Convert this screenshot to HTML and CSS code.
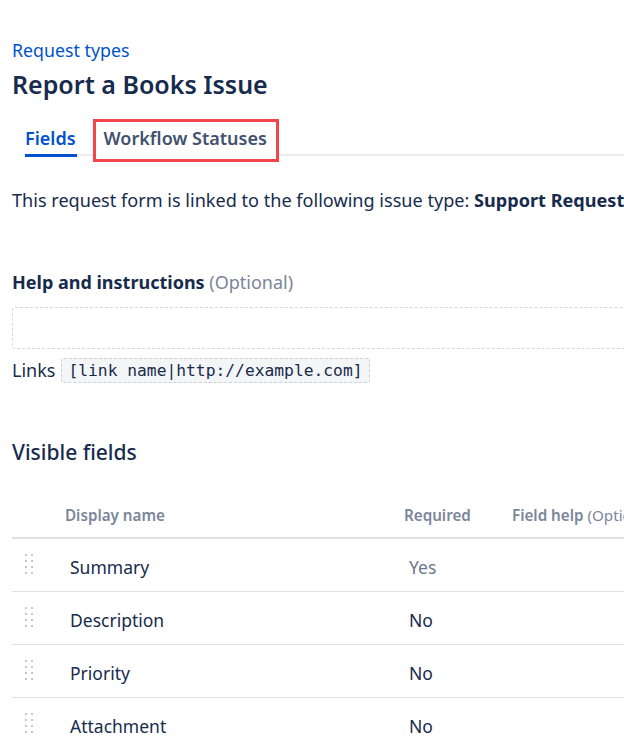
FILE: index.html
```html
<!DOCTYPE html>
<html>
<head>
<meta charset="utf-8">
<link rel="stylesheet" href="styles.css">
</head>
<body>
<div class="page">
  <a class="crumb" href="#">Request types</a>
  <h1 class="title">Report a Books Issue</h1>
  <div class="tabs">
    <div class="tab active">Fields</div>
    <div class="tab marked">Workflow Statuses</div>
  </div>
  <p class="linked">This request form is linked to the following issue type: <b>Support Request</b></p>

  <div class="help-label"><b>Help and instructions</b> <span class="opt">(Optional)</span></div>
  <div class="help-box"></div>
  <div class="links">Links <code class="code">[link name|http://example.com]</code></div>

  <h2 class="section">Visible fields</h2>
  <div class="table">
    <div class="thead">
      <div class="cell"></div>
      <div class="cell">Display name</div>
      <div class="cell">Required</div>
      <div class="cell">Field help <span class="opt-n">(Optional)</span></div>
    </div>
    <div class="trow">
      <div class="cell"><svg class="grip" viewBox="0 0 8 20" width="8" height="20"><g fill="#C1C7D0"><rect x="0" y="0" width="2" height="2"/><rect x="6" y="0" width="2" height="2"/><rect x="0" y="6" width="2" height="2"/><rect x="6" y="6" width="2" height="2"/><rect x="0" y="12" width="2" height="2"/><rect x="6" y="12" width="2" height="2"/><rect x="0" y="18" width="2" height="2"/><rect x="6" y="18" width="2" height="2"/></g></svg></div>
      <div class="cell name">Summary</div>
      <div class="cell req muted">Yes</div>
      <div class="cell"></div>
    </div>
    <div class="trow">
      <div class="cell"><svg class="grip" viewBox="0 0 8 20" width="8" height="20"><g fill="#C1C7D0"><rect x="0" y="0" width="2" height="2"/><rect x="6" y="0" width="2" height="2"/><rect x="0" y="6" width="2" height="2"/><rect x="6" y="6" width="2" height="2"/><rect x="0" y="12" width="2" height="2"/><rect x="6" y="12" width="2" height="2"/><rect x="0" y="18" width="2" height="2"/><rect x="6" y="18" width="2" height="2"/></g></svg></div>
      <div class="cell name">Description</div>
      <div class="cell req">No</div>
      <div class="cell"></div>
    </div>
    <div class="trow">
      <div class="cell"><svg class="grip" viewBox="0 0 8 20" width="8" height="20"><g fill="#C1C7D0"><rect x="0" y="0" width="2" height="2"/><rect x="6" y="0" width="2" height="2"/><rect x="0" y="6" width="2" height="2"/><rect x="6" y="6" width="2" height="2"/><rect x="0" y="12" width="2" height="2"/><rect x="6" y="12" width="2" height="2"/><rect x="0" y="18" width="2" height="2"/><rect x="6" y="18" width="2" height="2"/></g></svg></div>
      <div class="cell name">Priority</div>
      <div class="cell req">No</div>
      <div class="cell"></div>
    </div>
    <div class="trow">
      <div class="cell"><svg class="grip" viewBox="0 0 8 20" width="8" height="20"><g fill="#C1C7D0"><rect x="0" y="0" width="2" height="2"/><rect x="6" y="0" width="2" height="2"/><rect x="0" y="6" width="2" height="2"/><rect x="6" y="6" width="2" height="2"/><rect x="0" y="12" width="2" height="2"/><rect x="6" y="12" width="2" height="2"/><rect x="0" y="18" width="2" height="2"/><rect x="6" y="18" width="2" height="2"/></g></svg></div>
      <div class="cell name">Attachment</div>
      <div class="cell req">No</div>
      <div class="cell"></div>
    </div>
  </div>
</div>
</body>
</html>
```
FILE: styles.css
```css
html, body {
  margin: 0;
  padding: 0;
  background: #fff;
  overflow: hidden;
}
body {
  font-family: "Noto Sans", "Open Sans", sans-serif;
  color: #172B4D;
  width: 624px;
  height: 748px;
}
.page {
  width: 1000px;
  padding: 39px 0 0 12px;
}
.crumb {
  display: block;
  font-size: 17.8px;
  line-height: 22px;
  color: #0052CC;
  text-decoration: none;
}
.title {
  margin: 7px 0 0;
  font-size: 25px;
  line-height: 32px;
  font-weight: 600;
  color: #172B4D;
}
.tabs {
  display: flex;
  margin-top: 22px;
  margin-left: 13px;
  border-bottom: 2px solid #EBECF0;
  box-sizing: border-box;
  height: 34px;
}
.tab {
  font-size: 18px;
  font-weight: 600;
  color: #42526E;
  line-height: 22px;
  padding-top: 5px;
}
.tab.active {
  color: #0052CC;
  border-bottom: 3px solid #0052CC;
  margin-bottom: -3px;
  padding-right: 1px;
}
.tab.marked {
  margin-left: 16px;
  margin-top: -3px;
  padding: 5px 9px 0 8px;
  border: 3px solid #F4434A;
  background: #fff;
  position: relative;
  box-sizing: border-box;
  height: 43px;
}
.linked {
  margin: 32px 0 0;
  font-size: 18.1px;
  line-height: 24px;
  white-space: nowrap;
}
.linked b { font-weight: 700; }
.help-label {
  margin-top: 58px;
  font-size: 18px;
  line-height: 24px;
}
.help-label b { font-weight: 700; }
.opt { color: #7A869A; }
.help-box {
  margin-top: 13px;
  height: 40px;
  border: 1px dashed #D4D7DD;
  border-radius: 3px;
}
.links {
  margin-top: 8px;
  font-size: 18px;
  line-height: 26px;
  display: flex;
  align-items: center;
  gap: 6px;
}
.code {
  font-family: "DejaVu Sans Mono", "Liberation Mono", monospace;
  font-size: 16.3px;
  line-height: 23px;
  background: #F4F5F7;
  border: 1px dashed #CCCFD6;
  border-radius: 3px;
  padding: 0 6px;
  color: #172B4D;
}
.section {
  margin: 55px 0 0;
  font-size: 21px;
  line-height: 28px;
  font-weight: 500;
}
.table {
  margin-top: 27px;
  width: 900px;
}
.thead, .trow {
  display: grid;
  grid-template-columns: 53px 339px 108px 1fr;
  align-items: center;
}
.thead {
  height: 44px;
  border-bottom: 2px solid #DFE1E6;
  font-size: 15.2px;
  font-weight: 600;
  color: #7A869A;
}
.opt-n { font-weight: 400; }
.trow {
  height: 49px;
  padding-top: 3px;
  border-bottom: 1px solid #DFE1E6;
  font-size: 17.5px;
}
.name, .req { padding-left: 5px; }
.muted { color: #6B778C; }
.grip {
  display: block;
  margin-left: 13px;
  margin-top: -5px;
}
```
